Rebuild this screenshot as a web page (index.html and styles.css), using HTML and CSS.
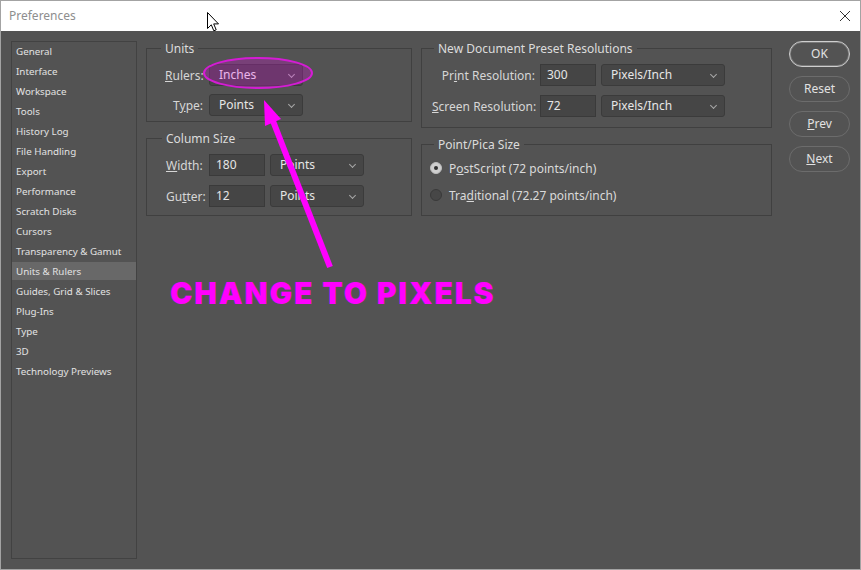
FILE: index.html
```html
<!DOCTYPE html>
<html>
<head>
<meta charset="utf-8">
<link rel="stylesheet" href="styles.css">
</head>
<body>
<div class="window">
  <div class="titlebar">
    <span class="title">Preferences</span>
    <svg class="close" width="12" height="12" viewBox="0 0 12 12"><path d="M1 1 L11 11 M11 1 L1 11" stroke="#333" stroke-width="1" fill="none"/></svg>
  </div>
  <div class="body">
    <ul class="sidebar">
      <li>General</li>
      <li>Interface</li>
      <li>Workspace</li>
      <li>Tools</li>
      <li>History Log</li>
      <li>File Handling</li>
      <li>Export</li>
      <li>Performance</li>
      <li>Scratch Disks</li>
      <li>Cursors</li>
      <li>Transparency &amp; Gamut</li>
      <li class="active">Units &amp; Rulers</li>
      <li>Guides, Grid &amp; Slices</li>
      <li>Plug-Ins</li>
      <li>Type</li>
      <li>3D</li>
      <li>Technology Previews</li>
    </ul>

    <div class="col col-left">
      <fieldset class="group units">
        <legend>Units</legend>
        <div class="row">
          <span class="lbl lbl-right"><u>R</u>ulers:</span>
          <div class="select sel-short"><span>Inches</span><i class="chev"></i></div>
        </div>
        <div class="row">
          <span class="lbl lbl-right">T<u>y</u>pe:</span>
          <div class="select sel-short"><span>Points</span><i class="chev"></i></div>
        </div>
      </fieldset>

      <fieldset class="group colsize">
        <legend>Column Size</legend>
        <div class="row">
          <span class="lbl"><u>W</u>idth:</span>
          <div class="input">180</div>
          <div class="select sel-short"><span>Points</span><i class="chev"></i></div>
        </div>
        <div class="row">
          <span class="lbl">Gu<u>t</u>ter:</span>
          <div class="input">12</div>
          <div class="select sel-short"><span>Points</span><i class="chev"></i></div>
        </div>
      </fieldset>
    </div>

    <div class="col col-right">
      <fieldset class="group presets">
        <legend>New Document Preset Resolutions</legend>
        <div class="row">
          <span class="lbl lbl-right lbl-wide">Pr<u>i</u>nt Resolution:</span>
          <div class="input">300</div>
          <div class="select sel-long"><span>Pixels/Inch</span><i class="chev"></i></div>
        </div>
        <div class="row">
          <span class="lbl lbl-right lbl-wide"><u>S</u>creen Resolution:</span>
          <div class="input">72</div>
          <div class="select sel-long"><span>Pixels/Inch</span><i class="chev"></i></div>
        </div>
      </fieldset>

      <fieldset class="group pica">
        <legend>Point/Pica Size</legend>
        <div class="radio-row">
          <span class="radio checked"></span>
          <span>P<u>o</u>stScript (72 points/inch)</span>
        </div>
        <div class="radio-row">
          <span class="radio"></span>
          <span>Tra<u>d</u>itional (72.27 points/inch)</span>
        </div>
      </fieldset>
    </div>

    <div class="buttons">
      <div class="btn btn-default">OK</div>
      <div class="btn">Reset</div>
      <div class="btn"><u>P</u>rev</div>
      <div class="btn"><u>N</u>ext</div>
    </div>
  </div>

  <svg class="annot" width="861" height="570" viewBox="0 0 861 570">
    <ellipse cx="258" cy="73" rx="54" ry="15" fill="rgba(255,0,255,0.22)" stroke="#d41cd4" stroke-width="2"/>
    <line x1="330" y1="267" x2="273" y2="121" stroke="#ff00ff" stroke-width="6"/>
    <polygon points="264,100 281,119 265,126" fill="#ff00ff"/>
  </svg>
  <div class="callout">CHANGE TO PIXELS</div>

  <svg class="cursor" width="13" height="21" viewBox="0 0 13 21">
    <path d="M0.5 0.5 L0.5 16.5 L4.3 12.8 L6.8 18.8 L9.2 17.8 L6.7 11.9 L11.5 11.9 Z" fill="#fff" stroke="#000" stroke-width="1"/>
  </svg>
</div>
</body>
</html>
```

FILE: styles.css
```css
* { box-sizing: border-box; }

html, body {
  margin: 0;
  padding: 0;
  width: 861px;
  height: 570px;
  overflow: hidden;
  background: #535353;
}

.window {
  position: relative;
  width: 861px;
  height: 570px;
  border: 1px solid #a3a3a3;
  background: #535353;
  font-family: "Noto Sans", "Open Sans", sans-serif;
  color: #dadada;
}

.titlebar {
  height: 30px;
  background: #ffffff;
  display: flex;
  align-items: center;
  justify-content: space-between;
  padding: 0 9px 0 8px;
}

.title {
  font-size: 12px;
  color: #8e8e8e;
  line-height: 16px;
}

.close {
  display: block;
  margin-top: -1px;
}

.body {
  display: flex;
  align-items: flex-start;
  height: 538px;
  padding: 10px 0 0 10px;
}

.sidebar {
  list-style: none;
  margin: 0 9px 0 0;
  padding: 0;
  width: 126px;
  height: 518px;
  border: 1px solid #424242;
  font-size: 9.8px;
  line-height: 19px;
  flex-shrink: 0;
}

.sidebar li {
  height: 18px;
  margin-bottom: 2px;
  padding-left: 4px;
  white-space: nowrap;
  color: #e2e2e2;
}

.sidebar li.active {
  background: #686868;
}

.col {
  display: flex;
  flex-direction: column;
  gap: 9px;
  flex-shrink: 0;
}

.col-left { width: 266px; margin-right: 9px; }
.col-right { width: 351px; margin-right: 17px; }

.group {
  margin: 0;
  border: 1px solid #404040;
  min-width: 0;
  display: flex;
  flex-direction: column;
}

.group legend {
  font-size: 12px;
  line-height: 15px;
  padding: 0 4px;
  color: #dcdcdc;
}

.units { padding: 8px 0 5px 18px; gap: 8px; }
.units legend { margin-left: -4px; }

.colsize { padding: 8px 0 8px 19px; gap: 9px; }
.colsize legend { margin-left: -4px; }

.presets { padding: 8px 0 10px 10px; gap: 9px; }
.presets legend { margin-left: 2px; }

.pica { padding: 6px 0 10px 8px; gap: 7px; }
.pica legend { margin-left: 4px; }

.row {
  display: flex;
  align-items: center;
  height: 22px;
  font-size: 12px;
}

.lbl {
  width: 38px;
  margin-right: 6px;
  white-space: nowrap;
  color: #d6d6d6;
}

.colsize .lbl { width: 37px; }

.lbl-right { text-align: right; }
.lbl-wide { width: 103px; margin-right: 5px; }

.input {
  width: 56px;
  height: 22px;
  margin-right: 5px;
  background: #454545;
  border: 1px solid #3a3a3a;
  padding-left: 6px;
  line-height: 20px;
  color: #e6e6e6;
}

.select {
  position: relative;
  height: 22px;
  background: #464646;
  border: 1px solid #3b3b3b;
  border-radius: 3px;
  padding-left: 9px;
  line-height: 20px;
  color: #e6e6e6;
}

.sel-short { width: 94px; }
.sel-long { width: 124px; }

.chev {
  position: absolute;
  right: 8px;
  top: 7px;
  width: 5px;
  height: 5px;
  border-right: 1px solid #a8a8a8;
  border-bottom: 1px solid #a8a8a8;
  transform: rotate(45deg);
}

.radio-row {
  display: flex;
  align-items: center;
  height: 20px;
  font-size: 12px;
  gap: 7px;
  color: #dadada;
}

.radio {
  width: 12px;
  height: 12px;
  border-radius: 50%;
  background: #474747;
  border: 1px solid #3a3a3a;
  position: relative;
}

.radio.checked {
  background: #cfcfcf;
  border-color: #bdbdbd;
}

.radio.checked::after {
  content: "";
  position: absolute;
  left: 3px;
  top: 3px;
  width: 4px;
  height: 4px;
  border-radius: 50%;
  background: #303030;
}

.buttons {
  display: flex;
  flex-direction: column;
  gap: 9px;
  width: 61px;
  flex-shrink: 0;
}

.btn {
  height: 26px;
  border: 1px solid #6c6c6c;
  border-radius: 13px;
  text-align: center;
  font-size: 12px;
  line-height: 24px;
  color: #e2e2e2;
}

.btn-default {
  border: 1px solid #cfcfcf;
  box-shadow: inset 0 0 0 1px #7a7a7a;
}

.annot {
  position: absolute;
  left: -1px;
  top: -1px;
  pointer-events: none;
}

.callout {
  position: absolute;
  left: 169px;
  top: 274px;
  font-family: "Inter", "Lato", sans-serif;
  font-weight: 900;
  font-size: 30px;
  letter-spacing: 1.9px;
  line-height: 36px;
  color: #ff00ff;
  white-space: nowrap;
}

.cursor {
  position: absolute;
  left: 206px;
  top: 11px;
}
```
